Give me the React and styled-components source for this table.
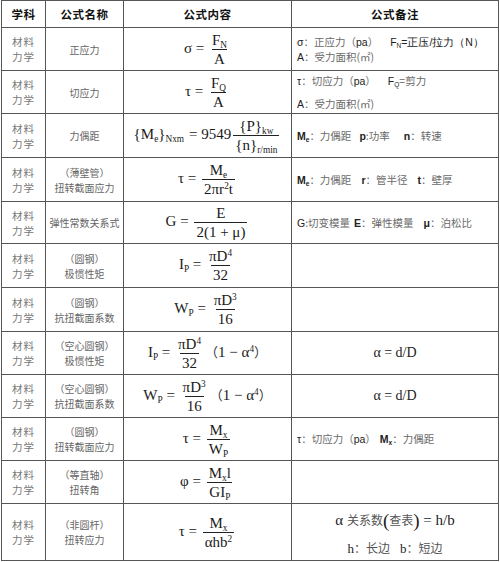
import React from 'react';
import styled, { createGlobalStyle } from 'styled-components';

const GlobalStyle = createGlobalStyle`
  html, body {
    margin: 0;
    padding: 0;
    background: #fff;
  }
  body {
    font-family: "Noto Sans CJK SC", "Noto Sans", sans-serif;
  }
`;

const rowHeights = [27, 43, 43, 44, 44, 42, 44, 44, 43, 43, 43, 43, 57];

const Sheet = styled.div`
  display: grid;
  grid-template-columns: 44px 78px 168px 207px;
  grid-template-rows: ${rowHeights.map(h => `${h}px`).join(' ')};
  margin-left: 1px;
  width: max-content;
  border-top: 1px solid #555;
  border-left: 1px solid #555;
`;

const Cell = styled.div`
  box-sizing: border-box;
  border-right: 1px solid #555;
  border-bottom: 1px solid #555;
  display: flex;
  flex-direction: column;
  justify-content: center;
  align-items: ${p => (p.$left ? 'flex-start' : 'center')};
  padding: ${p => (p.$left ? '0 0 0 5px' : '0')};
  gap: ${p => p.$gap || 0}px;
  overflow: hidden;
`;

const HeadCell = styled(Cell)`
  font-family: "Noto Sans CJK SC", sans-serif;
  font-weight: 700;
  font-size: 11.5px;
  color: #111;
  letter-spacing: 0.5px;
`;

const Subject = styled.div`
  font-size: 10.5px;
  line-height: 15px;
  color: #777;
  text-align: center;
  letter-spacing: 1px;
`;

const Name = styled.div`
  font-size: 10px;
  line-height: 15px;
  color: #666;
  text-align: center;
`;

const Formula = styled.div`
  font-family: "Liberation Serif", "DejaVu Serif", serif;
  font-size: 15px;
  color: #1a1a1a;
  white-space: nowrap;
  text-align: center;
`;

const Frac = styled.span`
  display: inline-flex;
  flex-direction: column;
  align-items: center;
  vertical-align: middle;
  line-height: 16px;
  margin: 0 2px;
`;

const Num = styled.span`
  padding: 0 2px 1px;
`;

const Den = styled.span`
  border-top: 1px solid #222;
  padding: 1px 2px 0;
`;

const Sub = styled.sub`
  font-size: 0.62em;
  vertical-align: -0.3em;
  line-height: 0;
`;

const Sup = styled.sup`
  font-size: 0.62em;
  vertical-align: 0.55em;
  line-height: 0;
`;

const Paren = styled.span`
  font-family: "Noto Sans CJK SC", sans-serif;
  font-size: 13px;
  color: #333;
`;

const Note = styled.div`
  font-size: 10.5px;
  line-height: 14px;
  color: #6a6a6a;
  white-space: nowrap;
`;

const Dark = styled.span`
  font-family: "Liberation Sans", "Noto Sans", sans-serif;
  color: #222;
  font-weight: ${p => (p.$bold ? 700 : 400)};
`;

const Gap = styled.span`
  display: inline-block;
  width: ${p => p.$w || 12}px;
`;

const Centered = styled.div`
  display: flex;
  flex-direction: column;
  align-items: center;
  align-self: stretch;
  gap: 7px;
  padding-top: 2px;
`;

const BigNote = styled.div`
  font-family: "Liberation Serif", serif;
  font-size: ${p => (p.$small ? 13 : 15)}px;
  color: #222;
  white-space: nowrap;
  span.cjk {
    font-family: "Noto Sans CJK SC", sans-serif;
    font-size: 12px;
    color: #555;
  }
`;

const Tall = styled.span`
  font-size: 19px;
  font-weight: 300;
  vertical-align: -2px;
`;

const Alpha = styled.div`
  font-family: "Liberation Serif", serif;
  font-size: 14px;
  color: #222;
`;

const rows = [
  {
    name: ['正应力'],
    formula: (
      <Formula>
        σ = <Frac><Num>F<Sub>N</Sub></Num><Den>A</Den></Frac>
      </Formula>
    ),
    note: (
      <>
        <Note><Dark>σ</Dark>：正应力（<Dark>pa</Dark>）<Gap /><Dark>F<Sub>N</Sub>=</Dark><Dark>正压/拉力（N）</Dark></Note>
        <Note><Dark>A</Dark>：受力面积(㎡)</Note>
      </>
    ),
    gap: 1,
  },
  {
    name: ['切应力'],
    formula: (
      <Formula>
        τ = <Frac><Num>F<Sub>Q</Sub></Num><Den>A</Den></Frac>
      </Formula>
    ),
    note: (
      <>
        <Note><Dark>τ</Dark>：切应力（<Dark>pa</Dark>）<Gap /><Dark>F<Sub>Q</Sub></Dark>=剪力</Note>
        <Note><Dark>A</Dark>：受力面积(㎡)</Note>
      </>
    ),
    gap: 9,
  },
  {
    name: ['力偶距'],
    formula: (
      <Formula>
        {'{'}M<Sub>e</Sub>{'}'}<Sub>Nxm</Sub><Gap $w={5} />= 9549
        <Frac><Num>{'{'}P{'}'}<Sub>kw</Sub></Num><Den>{'{'}n{'}'}<Sub>r/min</Sub></Den></Frac>
      </Formula>
    ),
    note: (
      <Note><Dark $bold>M<Sub>e</Sub></Dark>：力偶距<Gap $w={8} /><Dark $bold>p</Dark>:功率<Gap $w={14} /><Dark $bold>n</Dark>：转速</Note>
    ),
  },
  {
    name: ['（薄壁管）', '扭转截面应力'],
    formula: (
      <Formula>
        τ = <Frac><Num>M<Sub>e</Sub></Num><Den>2πr<Sup>2</Sup>t</Den></Frac>
      </Formula>
    ),
    note: (
      <Note><Dark $bold>M<Sub>e</Sub></Dark>：力偶距<Gap $w={10} /><Dark $bold>r</Dark>：管半径<Gap $w={10} /><Dark $bold>t</Dark>：壁厚</Note>
    ),
  },
  {
    name: ['弹性常数关系式'],
    formula: (
      <Formula>
        G = <Frac><Num>E</Num><Den>2(1 + μ)</Den></Frac>
      </Formula>
    ),
    note: (
      <Note><Dark>G</Dark>:切变模量<Gap $w={4} /><Dark $bold>E</Dark>：弹性模量<Gap $w={10} /><Dark $bold>μ</Dark>：泊松比</Note>
    ),
  },
  {
    name: ['（圆钢）', '极惯性矩'],
    formula: (
      <Formula>
        I<Sub>P</Sub> = <Frac><Num>πD<Sup>4</Sup></Num><Den>32</Den></Frac>
      </Formula>
    ),
  },
  {
    name: ['（圆钢）', '抗扭截面系数'],
    formula: (
      <Formula>
        W<Sub>P</Sub> = <Frac><Num>πD<Sup>3</Sup></Num><Den>16</Den></Frac>
      </Formula>
    ),
  },
  {
    name: ['（空心圆钢）', '极惯性矩'],
    formula: (
      <Formula>
        I<Sub>P</Sub> = <Frac><Num>πD<Sup>4</Sup></Num><Den>32</Den></Frac>
        <Paren>（</Paren>1 − α<Sup>4</Sup><Paren>）</Paren>
      </Formula>
    ),
    note: <Alpha>α = d/D</Alpha>,
    centerNote: true,
  },
  {
    name: ['（空心圆钢）', '抗扭截面系数'],
    formula: (
      <Formula>
        W<Sub>P</Sub> = <Frac><Num>πD<Sup>3</Sup></Num><Den>16</Den></Frac>
        <Paren>（</Paren>1 − α<Sup>4</Sup><Paren>）</Paren>
      </Formula>
    ),
    note: <Alpha>α = d/D</Alpha>,
    centerNote: true,
  },
  {
    name: ['（圆钢）', '扭转截面应力'],
    formula: (
      <Formula>
        τ = <Frac><Num>M<Sub>x</Sub></Num><Den>W<Sub>P</Sub></Den></Frac>
      </Formula>
    ),
    note: (
      <Note><Dark>τ</Dark>：切应力（<Dark>pa</Dark>）<Gap $w={4} /><Dark $bold>M<Sub>x</Sub></Dark>：力偶距</Note>
    ),
  },
  {
    name: ['（等直轴）', '扭转角'],
    formula: (
      <Formula>
        φ = <Frac><Num>M<Sub>x</Sub>l</Num><Den>GI<Sub>P</Sub></Den></Frac>
      </Formula>
    ),
  },
  {
    name: ['（非圆杆）', '扭转应力'],
    formula: (
      <Formula>
        τ = <Frac><Num>M<Sub>x</Sub></Num><Den>αhb<Sup>2</Sup></Den></Frac>
      </Formula>
    ),
    note: (
      <Centered>
        <BigNote>α <span className="cjk">关系数</span><Tall>(</Tall><span className="cjk">查表</span><Tall>)</Tall> = h/b</BigNote>
        <BigNote $small>h<span className="cjk">：长边</span><Gap $w={10} />b<span className="cjk">：短边</span></BigNote>
      </Centered>
    ),
    centerNote: true,
  },
];

export default function App() {
  return (
    <>
      <GlobalStyle />
      <Sheet>
        <HeadCell>学科</HeadCell>
        <HeadCell>公式名称</HeadCell>
        <HeadCell>公式内容</HeadCell>
        <HeadCell>公式备注</HeadCell>
        {rows.map((r, i) => (
          <React.Fragment key={i}>
            <Cell>
              <Subject>材料</Subject>
              <Subject>力学</Subject>
            </Cell>
            <Cell>
              {r.name.map((n, j) => (
                <Name key={j}>{n}</Name>
              ))}
            </Cell>
            <Cell>{r.formula}</Cell>
            <Cell $left={!r.centerNote} $gap={r.gap}>{r.note}</Cell>
          </React.Fragment>
        ))}
      </Sheet>
    </>
  );
}
